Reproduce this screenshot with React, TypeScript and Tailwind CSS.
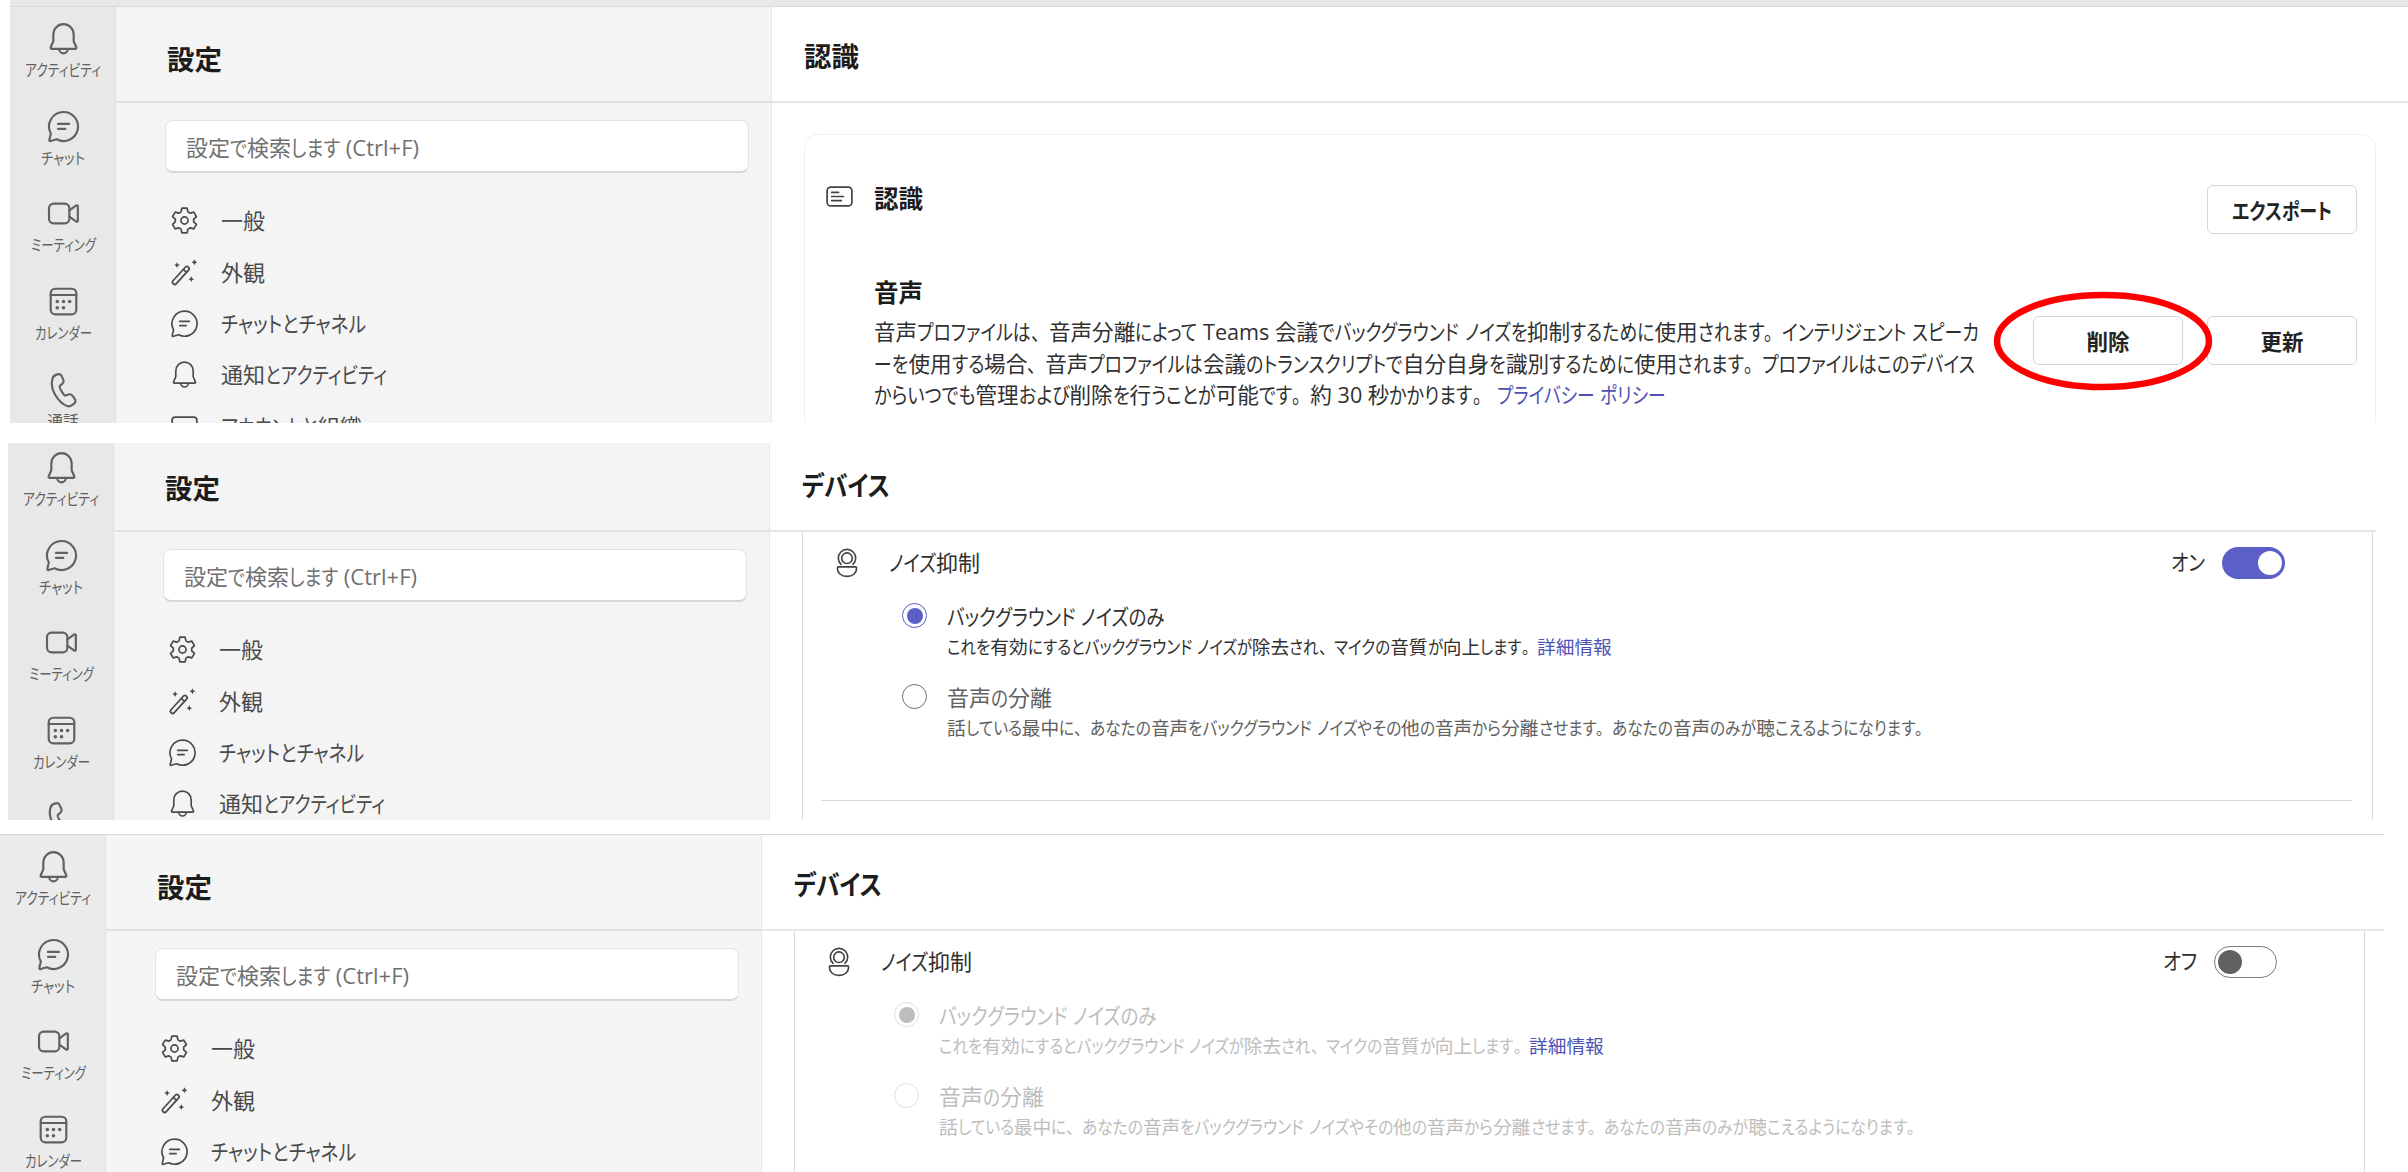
import { useLayoutEffect, useRef } from 'react'
import type { ReactNode } from 'react'
import clsx from 'clsx'

const KANA = /([\u3041-\u30ff]+|[、。])/

/* Japanese UI text: kana runs are condensed until the line is `w` wide, kanji keep their width */
function Jp({ text, w, className }: { text: string; w?: number; className?: string }) {
  const ref = useRef<HTMLSpanElement>(null)

  useLayoutEffect(() => {
    const el = ref.current
    if (!el || !w) return
    const runs = Array.from(el.querySelectorAll<HTMLElement>('[data-kana]'))
    runs.forEach((r) => {
      r.style.transform = ''
      r.style.marginRight = ''
    })
    const total = el.getBoundingClientRect().width
    const widths = runs.map((r) => r.getBoundingClientRect().width)
    const kana = widths.reduce((a, b) => a + b, 0)
    const k = 1 - (total - w) / kana
    runs.forEach((r, i) => {
      r.style.transform = `scaleX(${k})`
      r.style.marginRight = `${-widths[i] * (1 - k)}px`
    })
  }, [text, w])

  return (
    <span ref={ref} className={clsx('inline-block whitespace-pre', className)}>
      {text.split(KANA).map((part, i) =>
        i % 2 ? (
          <span
            key={i}
            data-kana
            className={clsx('inline-block origin-left', /[、。]/.test(part) && "[font-feature-settings:'palt'_0]")}
          >
            {part}
          </span>
        ) : (
          part
        )
      )}
    </span>
  )
}

/* ---------- icons ---------- */

function Icon24({ children }: { children: ReactNode }) {
  return (
    <svg viewBox="0 0 24 24" className="h-[37px] w-[37px] shrink-0" fill="none" stroke="currentColor" strokeWidth="1.4" strokeLinejoin="round" strokeLinecap="round">
      {children}
    </svg>
  )
}

function Icon20({ children }: { children: ReactNode }) {
  return (
    <svg viewBox="0 0 20 20" className="h-[31px] w-[31px] shrink-0" fill="none" stroke="currentColor" strokeWidth="1.1" strokeLinejoin="round" strokeLinecap="round">
      {children}
    </svg>
  )
}

const gearPoints = Array.from({ length: 6 }, (_, i) => i * 60 - 90)
  .flatMap((a) => [
    [a - 22, 6],
    [a - 12, 8.1],
    [a + 12, 8.1],
    [a + 22, 6],
  ])
  .map(([a, r]) => {
    const t = (a * Math.PI) / 180
    return `${(10 + r * Math.cos(t)).toFixed(2)},${(10 + r * Math.sin(t)).toFixed(2)}`
  })
  .join(' ')

const BellPath = () => (
  <>
    <path d="M12 2.7c-3.7 0-6.6 3-6.6 6.7v4.4l-1.7 3.9c-.2.5.1 1 .7 1h15.2c.6 0 .9-.5.7-1l-1.7-3.9V9.4c0-3.7-2.9-6.7-6.6-6.7Z" />
    <path d="M9.2 18.8a2.8 2.8 0 0 0 5.6 0" />
  </>
)

const ChatPath = () => (
  <>
    <path d="M12 2.6a9.4 9.4 0 1 1-4.4 17.7l-4 1.1a.6.6 0 0 1-.8-.8l1-4A9.4 9.4 0 0 1 12 2.6Z" />
    <path d="M8.4 10.3h7.2M8.4 13.5h4.8" />
  </>
)

const railItems = [
  { label: 'アクティビティ', w: 76, icon: <BellPath /> },
  { label: 'チャット', w: 44, icon: <ChatPath /> },
  {
    label: 'ミーティング',
    w: 65,
    icon: (
      <>
        <rect x="2.6" y="5.6" width="13.2" height="12.8" rx="3" />
        <path d="m15.8 10 4.5-3.2c.5-.3 1 0 1 .5v9.4c0 .5-.5.8-1 .5L15.8 14" />
      </>
    ),
  },
  {
    label: 'カレンダー',
    w: 57,
    icon: (
      <>
        <rect x="3.7" y="3.7" width="16.6" height="16.6" rx="3" />
        <path d="M3.7 7.8h16.6" />
        <g fill="currentColor" stroke="none">
          <circle cx="8" cy="12" r="1.15" />
          <circle cx="12" cy="12" r="1.15" />
          <circle cx="16" cy="12" r="1.15" />
          <circle cx="8" cy="16" r="1.15" />
          <circle cx="12" cy="16" r="1.15" />
        </g>
      </>
    ),
  },
  {
    label: '通話',
    icon: (
      <path d="m7.1 2.5 1.1-.3c1.1-.3 2.3.2 2.7 1.3l.9 2.1c.4.9.2 2-.6 2.7L9.6 9.8c-.3.3.3 1.9 1.2 3.4s2 2.8 2.4 2.7l2.1-.7c1-.3 2 .1 2.6.9l1.3 1.8c.7.9.6 2.3-.2 3.1l-.9.8c-1 1-2.4 1.3-3.7.9-3-.9-5.7-3.6-8-7.6S4.1 7.8 4.8 5.2c.3-1.3 1.1-2.3 2.3-2.7Z" />
    ),
  },
]

const menuItems = [
  {
    label: '一般',
    icon: (
      <>
        <polygon points={gearPoints} />
        <circle cx="10" cy="10" r="2.3" />
      </>
    ),
  },
  {
    label: '外観',
    icon: (
      <>
        <g transform="rotate(-48 7.6 11.9)">
          <rect x="0.3" y="10.5" width="14.6" height="2.8" rx="1.4" />
          <path d="M11.6 10.5v2.8" />
        </g>
        <g fill="currentColor" stroke="none">
          <path d="m5.2 3.3.6 1.3 1.3.6-1.3.6-.6 1.3-.6-1.3-1.3-.6 1.3-.6Z" />
          <path d="m16.4 1.5.6 1.3 1.3.6-1.3.6-.6 1.3-.6-1.3-1.3-.6 1.3-.6Z" />
          <path d="m14.4 12.4.6 1.3 1.3.6-1.3.6-.6 1.3-.6-1.3-1.3-.6 1.3-.6Z" />
        </g>
      </>
    ),
  },
  {
    label: 'チャットとチャネル',
    w: 145,
    icon: (
      <g transform="translate(-.3 -.2) scale(.86)" strokeWidth="1.25">
        <ChatPath />
      </g>
    ),
  },
  {
    label: '通知とアクティビティ',
    w: 166,
    icon: (
      <g transform="translate(-.2 -.3) scale(.85)" strokeWidth="1.25">
        <BellPath />
      </g>
    ),
  },
  {
    label: 'アカウントと組織',
    w: 141,
    icon: <rect x="2" y="4" width="16" height="12" rx="2" />,
  },
]

function NoiseIcon() {
  return (
    <svg viewBox="0 0 24 30" className="h-[30px] w-6 shrink-0 text-[#424242]" fill="none" stroke="currentColor" strokeWidth="1.6" strokeLinejoin="round" strokeLinecap="round">
      <path d="M6 16.4a8.7 8.7 0 1 1 12 0" />
      <circle cx="12" cy="10.2" r="5.3" />
      <path d="M3.4 18.9h17.2c.6 0 1 .4 1 1 0 4.9-3.6 8.5-9.6 8.5s-9.6-3.6-9.6-8.5c0-.6.4-1 1-1Z" />
    </svg>
  )
}

/* ---------- shared chrome ---------- */

function Panel({
  title,
  titleWidth,
  light,
  className,
  mainClass,
  children,
}: {
  title: string
  titleWidth?: number
  light?: boolean
  className?: string
  mainClass: string
  children: ReactNode
}) {
  return (
    <div className={clsx('flex', className)}>
      <nav className={clsx('flex w-[106px] shrink-0 flex-col border-r border-[#dedede] pt-[13px] pl-px', light ? 'bg-[#ebebeb]' : 'bg-[#e8e8e8]')}>
        {railItems.map((item) => (
          <div key={item.label} className="flex h-[87.7px] shrink-0 flex-col items-center text-[#616161]">
            <Icon24>{item.icon}</Icon24>
            <Jp text={item.label} w={item.w} className="text-[15.7px] leading-[26px]" />
          </div>
        ))}
      </nav>

      <aside className={clsx('flex w-[656px] shrink-0 flex-col border-r border-[#e6e6e6]', light ? 'bg-[#f5f5f5]' : 'bg-[#f4f4f4]')}>
        <header className="flex h-24 shrink-0 items-center border-b-2 border-[#e2e2e2] pt-3 pl-[51px]">
          <h1 className="text-[27.5px] font-bold text-[#1c1c1c]">設定</h1>
        </header>
        <div className="mt-[17px] ml-[49px] flex h-[53px] w-[584px] shrink-0 items-center rounded-lg border border-b-2 border-[#e4e4e4] border-b-[#d6d6d6] bg-white pt-[3px] pl-5 text-[22px] text-[#707070]">
          <Jp text="設定で検索します (Ctrl+F)" w={233} />
        </div>
        <ul className="mt-[22px] pl-[53px]">
          {menuItems.map((item) => (
            <li key={item.label} className="flex h-[51.4px] items-center gap-[21px] text-[#4a4a4a]">
              <Icon20>{item.icon}</Icon20>
              <Jp text={item.label} w={item.w} className="text-[22px]" />
            </li>
          ))}
        </ul>
      </aside>

      <main className={clsx('shrink-0', mainClass)}>
        <header className="flex h-24 items-center border-b-2 border-[#e6e6e6] pt-1.5 pl-8">
          <Jp text={title} w={titleWidth} className="text-[27.5px] font-bold text-[#1c1c1c]" />
        </header>
        {children}
      </main>
    </div>
  )
}

function Button({ children }: { children: ReactNode }) {
  return (
    <button className="flex h-[49px] w-[150px] items-center justify-center rounded-md border-[1.5px] border-[#d6d6d6] bg-white pt-[3px] text-[21.5px] font-bold text-[#242424]">
      {children}
    </button>
  )
}

/* ---------- recognition page ---------- */

function Recognition() {
  return (
    <section className="mt-[31px] ml-8 h-[420px] w-[1572px] rounded-[14px] border-[1.5px] border-[#f0f0f0] pr-[18px] pl-[19px]">
      <div className="flex items-start pt-[50px]">
        <div className="flex h-[22px] items-center text-[#424242]">
          <Icon20>
            <rect x="2" y="3.9" width="16" height="12.2" rx="2.4" />
            <path d="M5 7.4h4.4M5 10h7.5M5 12.6h6.2" />
          </Icon20>
        </div>
        <h2 className="ml-[19px] text-[24.5px] leading-[28px] font-bold text-[#1c1c1c]">認識</h2>
        <div className="ml-auto">
          <Button>
            <Jp text="エクスポート" w={100} />
          </Button>
        </div>
      </div>

      <div className="mt-[42px] flex items-start pl-[50px] text-[#303030]">
        <div className="flex flex-col items-start text-[21.6px] leading-[31.5px]">
          <h3 className="mb-2 pt-px text-[24.5px] leading-[31px] font-bold text-[#1c1c1c]">音声</h3>
          <Jp
            w={1105}
            text="音声プロファイルは、音声分離によって Teams 会議でバックグラウンド ノイズを抑制するために使用されます。インテリジェント スピーカ"
          />
          <Jp
            w={1101}
            text="ーを使用する場合、音声プロファイルは会議のトランスクリプトで自分自身を識別するために使用されます。プロファイルはこのデバイス"
          />
          <div className="flex">
            <Jp w={617} text="からいつでも管理および削除を行うことが可能です。約 30 秒かかります。" />
            <Jp w={169} className="ml-[6px] text-[#4f52b2]" text="プライバシー ポリシー" />
          </div>
        </div>
        <div className="mt-10 ml-auto flex gap-6">
          <div className="relative">
            <Button>削除</Button>
            <svg viewBox="0 0 220 100" className="pointer-events-none absolute -top-[25px] -left-10 h-[100px] w-[220px]" fill="none">
              <ellipse cx="110" cy="50" rx="106" ry="46" stroke="#ff0000" strokeWidth="6.5" />
            </svg>
          </div>
          <Button>更新</Button>
        </div>
      </div>
    </section>
  )
}

/* ---------- devices page ---------- */

function Radio({ checked, disabled }: { checked?: boolean; disabled?: boolean }) {
  return (
    <span
      className={clsx(
        'flex h-[25px] w-[25px] shrink-0 items-center justify-center rounded-full border-[1.5px]',
        disabled ? 'border-[#e0e0e0]' : checked ? 'border-[#5b5fc7]' : 'border-[#707070]'
      )}
    >
      {checked && <span className={clsx('h-4 w-4 rounded-full', disabled ? 'bg-[#bdbdbd]' : 'bg-[#5b5fc7]')} />}
    </span>
  )
}

function Toggle({ on }: { on: boolean }) {
  return (
    <span
      className={clsx(
        'flex h-8 w-[63px] items-center rounded-full px-[3px]',
        on ? 'justify-end bg-[#5b5fc7]' : 'justify-start border-[1.5px] border-[#7a7a7a] bg-white'
      )}
    >
      <span className={clsx('h-6 w-6 rounded-full', on ? 'bg-white' : 'bg-[#616161]')} />
    </span>
  )
}

function Devices({ on }: { on: boolean }) {
  return (
    <section className="ml-8 h-[420px] w-[1571px] border-x-[1.5px] border-[#dadada]">
      <div className="flex h-[61px] items-center pr-[87px] pl-[32px]">
        <NoiseIcon />
        <Jp text="ノイズ抑制" w={91} className="ml-[30px] text-[22px] text-[#303030]" />
        <Jp text={on ? 'オン' : 'オフ'} w={34} className="mr-[17px] ml-auto text-[21.5px] text-[#303030]" />
        <Toggle on={on} />
      </div>

      <div className="flex gap-5 pl-[99px]">
        <div className="pt-[10px]">
          <Radio checked disabled={!on} />
        </div>
        <div className={clsx('flex flex-col items-start', on ? 'text-[#303030]' : 'text-[#bdbdbd]')}>
          <Jp text="バックグラウンド ノイズのみ" w={218} className="mt-2 text-[22px] leading-[31px]" />
          <div className="flex text-[18.7px] leading-[29px]">
            <Jp text="これを有効にするとバックグラウンド ノイズが除去され、マイクの音質が向上します。" w={590} />
            <Jp text="詳細情報" className="text-[#4f52b2]" />
          </div>
        </div>
      </div>

      <div className="mt-[14px] flex gap-5 pl-[99px]">
        <div className="pt-[9px]">
          <Radio disabled={!on} />
        </div>
        <div className={clsx('flex flex-col items-start', on ? 'text-[#616161]' : 'text-[#bdbdbd]')}>
          <Jp text="音声の分離" w={105} className="mt-[7px] text-[22px] leading-[31px]" />
          <Jp
            text="話している最中に、あなたの音声をバックグラウンド ノイズやその他の音声から分離させます。あなたの音声のみが聴こえるようになります。"
            w={984}
            className="text-[18.7px] leading-[29px]"
          />
        </div>
      </div>

      <hr className="mt-[58px] mr-[20px] ml-[18px] border-t-[1.5px] border-[#d9d9d9]" />
    </section>
  )
}

export default function App() {
  return (
    <div
      lang="ja"
      className="h-[1172px] w-[2408px] overflow-hidden bg-white font-['Open_Sans','Noto_Sans_CJK_JP',sans-serif] [font-feature-settings:'palt']"
    >
      <div className="ml-[10px] h-[423px] overflow-hidden">
        <div className="h-[7px] border-b border-[#dadada] bg-[#e8e8e8]" />
        <Panel title="認識" mainClass="w-[1636px]">
          <Recognition />
        </Panel>
      </div>

      <div className="mt-5 ml-2 h-[377px] overflow-hidden">
        <Panel title="デバイス" titleWidth={88} className="-mt-[7px]" mainClass="w-[1606px]">
          <Devices on />
        </Panel>
      </div>

      <div className="mt-[14px] h-[338px] w-[2384px] overflow-hidden border-t border-[#d6d6d6]">
        <Panel title="デバイス" titleWidth={88} light mainClass="w-[1622px]">
          <Devices on={false} />
        </Panel>
      </div>
    </div>
  )
}
